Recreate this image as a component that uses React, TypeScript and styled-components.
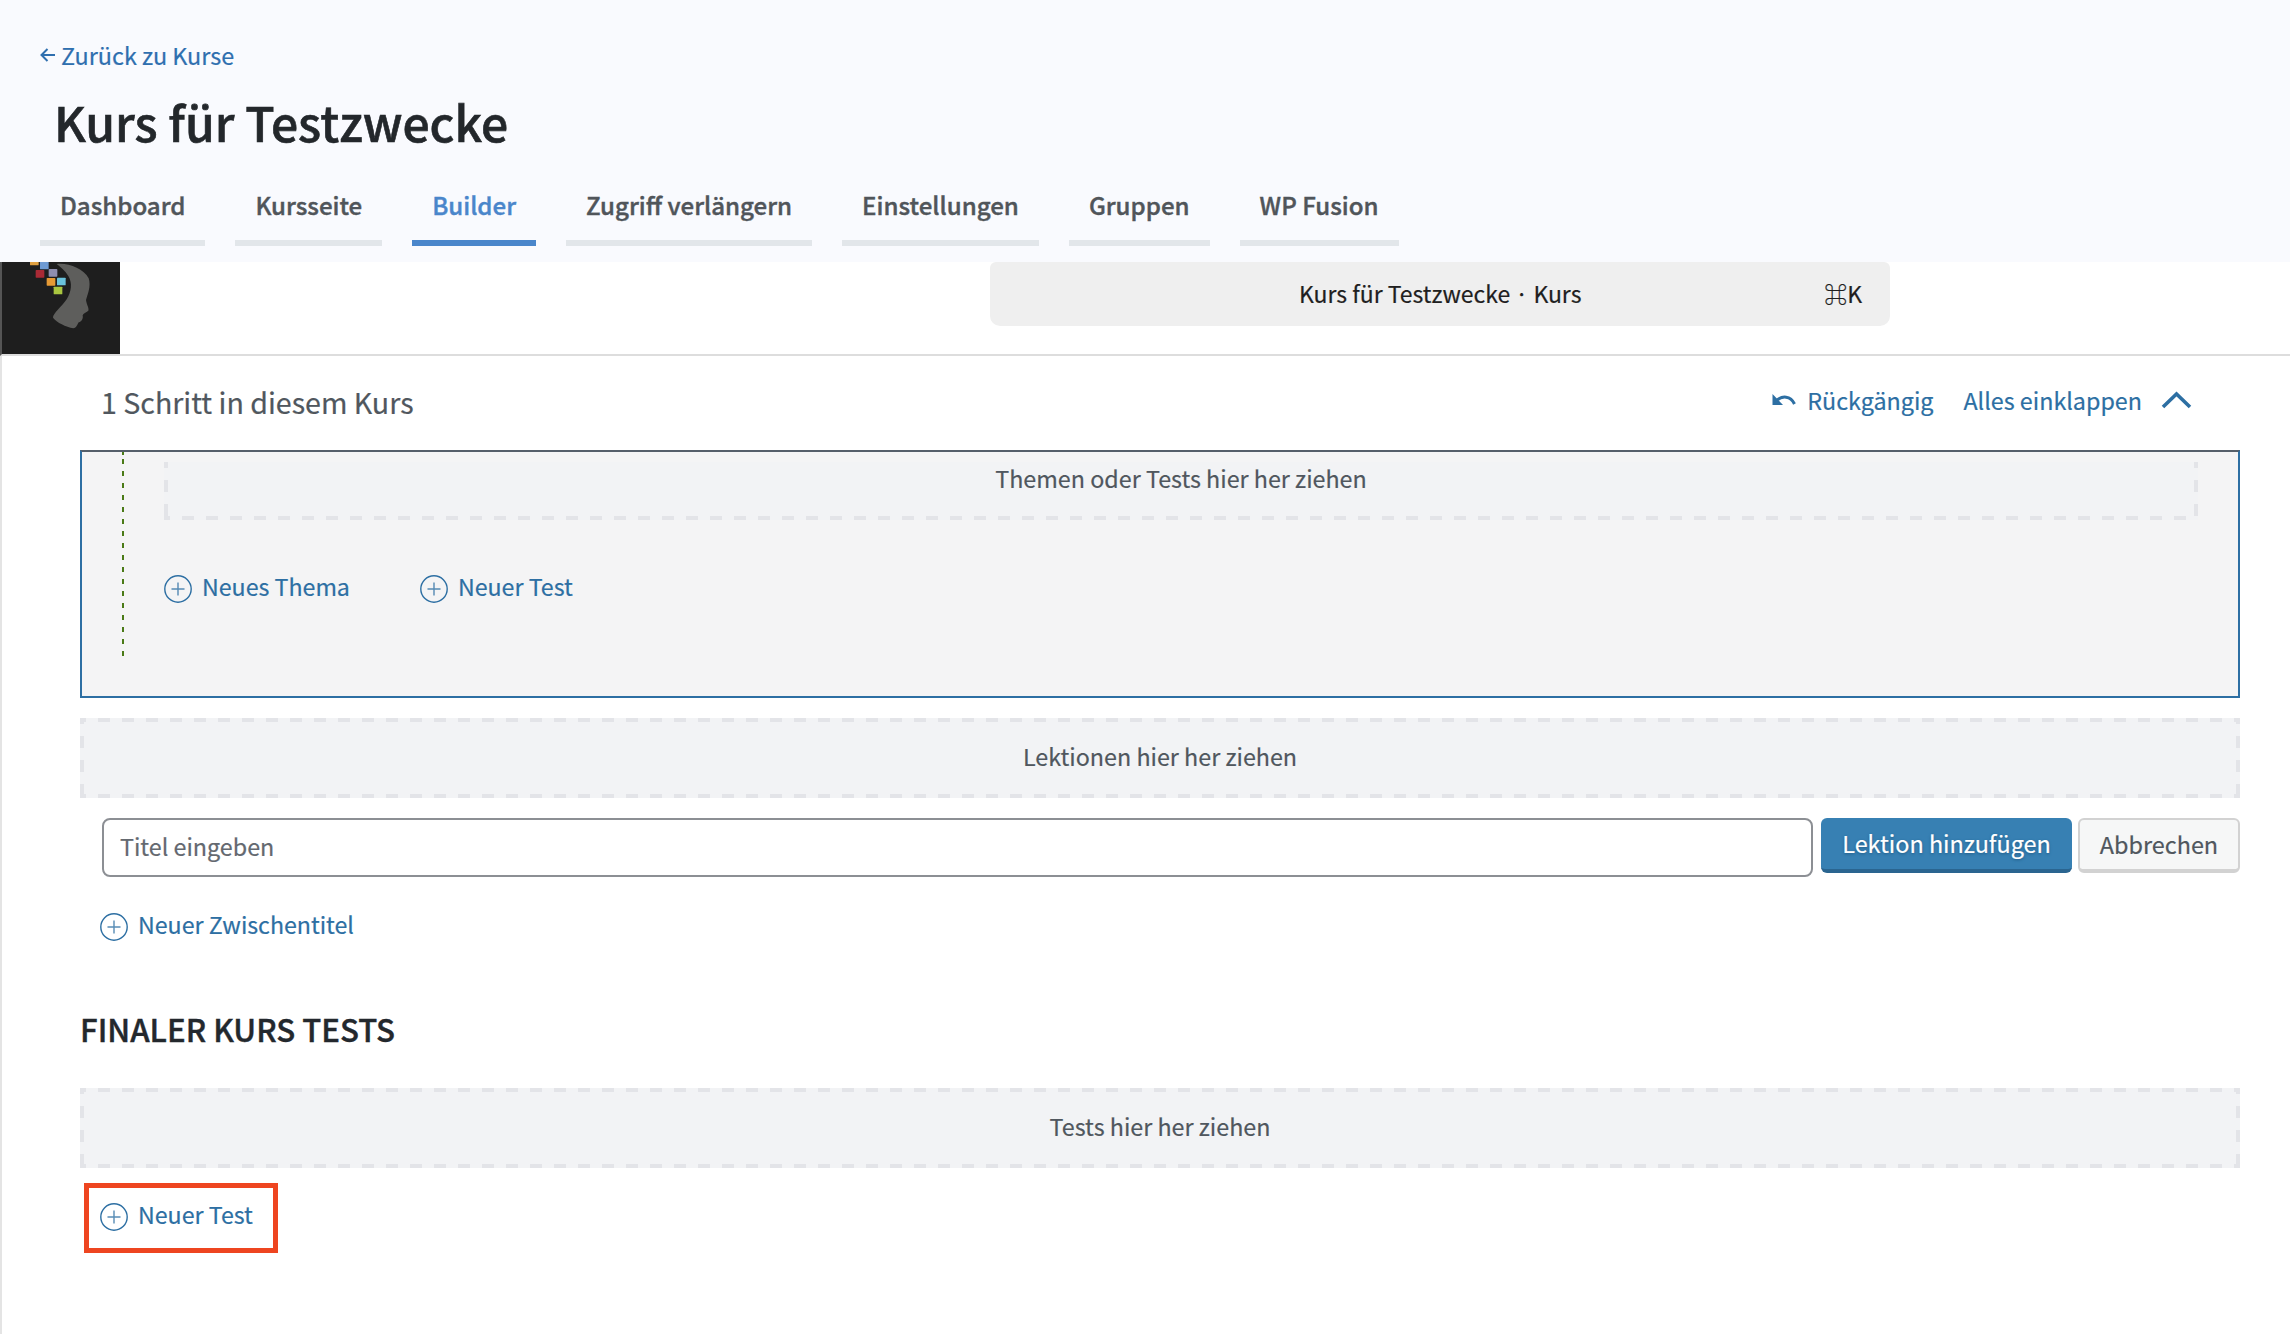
import React from "react";
import styled, { createGlobalStyle, css } from "styled-components";

const GlobalStyle = createGlobalStyle`
  html, body {
    margin: 0;
    padding: 0;
    background: #ffffff;
  }
  body {
    font-family: "Noto Sans CJK JP", "Noto Sans", sans-serif;
    -webkit-text-stroke: 0.2px;
  }
`;

const dashH = "repeating-linear-gradient(90deg, #e3e4e8 0 6px, transparent 6px 18px, #e3e4e8 18px 24px)";
const dashV = "repeating-linear-gradient(180deg, #e3e4e8 0 6px, transparent 6px 18px, #e3e4e8 18px 24px)";

const dashedFrame = css`
  background:
    ${dashH} left top / 100% 4px no-repeat,
    ${dashH} left bottom / 100% 4px no-repeat,
    ${dashV} left top / 4px 100% no-repeat,
    ${dashV} right top / 4px 100% no-repeat,
    #f2f3f5;
`;

const dashedOpenTop = css`
  background:
    ${dashH} left bottom / 100% 4px no-repeat,
    ${dashV} left top / 4px 100% no-repeat,
    ${dashV} right top / 4px 100% no-repeat,
    #f2f3f5;
`;

const Page = styled.div`
  width: 2290px;
  height: 1334px;
  overflow: hidden;
  background: #ffffff;
`;

const Header = styled.header`
  height: 262px;
  box-sizing: border-box;
  padding: 38px 0 0 40px;
  background: #f9fafe;
`;

const BackLink = styled.a`
  display: flex;
  align-items: center;
  gap: 6px;
  height: 34px;
  color: #2f6faf;
  font-size: 23.4px;
  line-height: 34px;
`;

const Title = styled.h1`
  margin: 14px 0 0 14px;
  color: #23272b;
  font-size: 48.1px;
  line-height: 70px;
  font-weight: 500;
  -webkit-text-stroke: 0.6px;
`;

const Tabs = styled.nav`
  display: flex;
  gap: 30px;
  margin-top: 32px;
`;

const Tab = styled.a<{ $active?: boolean }>`
  height: 52px;
  padding: 0 20px;
  border-bottom: 6px solid ${(p) => (p.$active ? "#4a86cb" : "#e2e6ea")};
  color: ${(p) => (p.$active ? "#4a86cb" : "#50555a")};
  font-size: 24.1px;
  line-height: 34px;
  font-weight: 500;
  -webkit-text-stroke: 0.4px;
`;

const TopBar = styled.div`
  display: flex;
  height: 94px;
  box-sizing: border-box;
  border-bottom: 2px solid #dddddd;
  border-left: 2px solid #555555;
`;

const Logo = styled.svg`
  width: 118px;
  height: 92px;
`;

const SearchBar = styled.div`
  display: flex;
  align-items: center;
  width: 900px;
  height: 64px;
  box-sizing: border-box;
  margin-left: 870px;
  padding: 0 28px 3px 309px;
  border-radius: 6px 6px 10px 10px;
  background: #efefef;
  color: #1f1f1f;
  font-size: 23px;
`;

const SearchTitle = styled.span`
  flex: 1;
`;

const Content = styled.main`
  height: 978px;
  box-sizing: border-box;
  padding: 0 50px 0 78px;
  border-left: 2px solid #e4e4e4;
`;

const StepsBar = styled.div`
  display: flex;
  align-items: center;
  justify-content: space-between;
  height: 94px;
  padding-left: 21px;
  padding-right: 48px;
`;

const StepsCount = styled.span`
  margin-bottom: 3px;
  color: #50575e;
  font-size: 28.6px;
`;

const StepsActions = styled.div`
  display: flex;
  align-items: center;
  margin-bottom: 7px;
  color: #2d6fa3;
  font-size: 23.3px;
`;

const ActionLink = styled.a`
  display: flex;
  align-items: center;
  gap: 11px;
  margin-left: 30px;
`;

const ChevronIcon = styled.svg`
  margin-left: 8px;
`;

const LessonBox = styled.section`
  position: relative;
  height: 248px;
  box-sizing: border-box;
  padding: 10px 40px 0 82px;
  border: 2px solid #2d6fa3;
  border-top-color: #555f6a;
  background: #f4f4f5;
`;

const TreeLine = styled.div`
  position: absolute;
  left: 40px;
  top: 0;
  width: 2px;
  height: 204px;
  background:
    linear-gradient(#4a7a17 0 3px, transparent 3px),
    repeating-linear-gradient(180deg, transparent 0 7px, #4a7a17 7px 12px);
`;

const DropZone = styled.div`
  display: flex;
  align-items: center;
  justify-content: center;
  box-sizing: border-box;
  height: 80px;
  padding-bottom: 4px;
  ${dashedFrame}
  color: #50575e;
  font-size: 23.3px;
`;

const NestedDropZone = styled(DropZone)`
  height: 58px;
  padding-bottom: 26px;
  ${dashedOpenTop}
`;

const LinkRow = styled.div<{ $gap?: number }>`
  display: flex;
  align-items: center;
  gap: ${(p) => p.$gap ?? 0}px;
`;

const AddLink = styled.a`
  display: flex;
  align-items: center;
  gap: 10px;
  color: #2d6fa3;
  font-size: 23.2px;
  line-height: 34px;
`;

const BoxLinks = styled(LinkRow)`
  margin-top: 49px;
`;

const LessonDrop = styled(DropZone)`
  margin-top: 20px;
`;

const AddForm = styled.form`
  display: flex;
  align-items: flex-start;
  margin: 20px 0 0 22px;
`;

const TitleInput = styled.input`
  flex: 1;
  height: 59px;
  box-sizing: border-box;
  padding: 0 16px 3px;
  border: 2px solid #8c8f94;
  border-radius: 8px;
  background: #ffffff;
  color: #50575e;
  font-family: inherit;
  font-size: 23.3px;
  &::placeholder {
    color: #646970;
    opacity: 1;
  }
`;

const PrimaryButton = styled.button`
  width: 251px;
  height: 55px;
  margin-left: 8px;
  padding: 0 0 1px;
  border: 0;
  border-bottom: 4px solid #2a6590;
  border-radius: 6px;
  background: #3780b3;
  color: #ffffff;
  font-family: inherit;
  font-size: 23.4px;
  text-shadow: 0 1px 3px #1f5a85;
`;

const SecondaryButton = styled.button`
  width: 162px;
  height: 55px;
  margin-left: 6px;
  padding: 0 0 1px;
  border: 2px solid #d2d2d2;
  border-bottom-width: 4px;
  border-radius: 6px;
  background: #f6f7f7;
  color: #50575e;
  font-family: inherit;
  font-size: 23.4px;
`;

const SubtitleRow = styled(LinkRow)`
  margin: 30px 0 0 20px;
`;

const SectionTitle = styled.h2`
  margin: 66px 0 0 0;
  color: #23282d;
  font-size: 31.2px;
  line-height: 44px;
  font-weight: 500;
  -webkit-text-stroke: 0.4px;
`;

const FinalDrop = styled(DropZone)`
  margin-top: 37px;
`;

const Highlight = styled.div`
  display: flex;
  align-items: center;
  width: 194px;
  height: 70px;
  box-sizing: border-box;
  margin: 15px 0 0 4px;
  padding: 0 0 8px 11px;
  border: 5px solid #ee4520;
`;

const PlusGlyph = styled.svg`
  margin-top: 6px;
`;

const PlusIcon = () => (
  <PlusGlyph width="28" height="28" viewBox="0 0 28 28" fill="none" stroke="#2d6fa3">
    <circle cx="14" cy="14" r="13.2" strokeWidth="1.4" />
    <path d="M14 7.5v13M7.5 14h13" strokeWidth="1.4" opacity="0.8" />
  </PlusGlyph>
);

const App: React.FC = () => {
  return (
    <Page>
      <GlobalStyle />
      <Header>
        <BackLink>
          <svg width="15" height="14" viewBox="0 0 15 14" fill="none" stroke="#2f6faf" strokeWidth="2">
            <path d="M15 7H1.500M7.500 1 1.500 7l6 6" />
          </svg>
          Zurück zu Kurse
        </BackLink>
        <Title>Kurs für Testzwecke</Title>
        <Tabs>
          <Tab>Dashboard</Tab>
          <Tab>Kursseite</Tab>
          <Tab $active>Builder</Tab>
          <Tab>Zugriff verlängern</Tab>
          <Tab>Einstellungen</Tab>
          <Tab>Gruppen</Tab>
          <Tab>WP Fusion</Tab>
        </Tabs>
      </Header>
      <TopBar>
        <Logo viewBox="6 66 354 276">
          <rect x="6" y="66" width="354" height="276" fill="#1e1e1e" />
          <path
            d="M170 72C205 68 250 85 266 115C274 140 262 165 258 180C260 195 268 205 265 212C258 217 250 220 248 226C250 235 246 245 236 247C232 255 228 265 220 265C198 260 170 248 159 233C158 222 185 200 200 178C214 155 218 130 205 108C196 92 180 80 170 72Z"
            fill="#5e5e5c"
          />
          <rect x="90" y="62" width="26" height="14" rx="2" fill="#e0a040" />
          <rect x="120" y="62" width="26" height="26" rx="2" fill="#6f9bd4" />
          <rect x="146" y="87" width="26" height="23" rx="2" fill="#8e8eb0" />
          <rect x="107" y="90" width="26" height="23" rx="2" fill="#a92a35" />
          <rect x="140" y="114" width="26" height="23" rx="2" fill="#e69a35" />
          <rect x="171" y="113" width="26" height="23" rx="2" fill="#69c2dc" />
          <rect x="161" y="140" width="26" height="23" rx="2" fill="#a9c63f" />
        </Logo>
        <SearchBar>
          <SearchTitle>Kurs für Testzwecke · Kurs</SearchTitle>
          <span>⌘K</span>
        </SearchBar>
      </TopBar>
      <Content>
        <StepsBar>
          <StepsCount>1 Schritt in diesem Kurs</StepsCount>
          <StepsActions>
            <ActionLink>
              <svg width="24" height="14" viewBox="0 0 24 14" fill="none">
                <path d="M0.500 1V12H11Z" fill="#2d6fa3" />
                <path d="M4.500 7.500C10 2.500 18.500 2.500 22.500 11" stroke="#2d6fa3" strokeWidth="3" />
              </svg>
              Rückgängig
            </ActionLink>
            <ActionLink>
              Alles einklappen
              <ChevronIcon width="31" height="18" viewBox="0 0 31 18" fill="none" stroke="#2d6fa3" strokeWidth="3.600">
                <path d="M2 16 15.500 3 29 16" />
              </ChevronIcon>
            </ActionLink>
          </StepsActions>
        </StepsBar>
        <LessonBox>
          <TreeLine />
          <NestedDropZone>Themen oder Tests hier her ziehen</NestedDropZone>
          <BoxLinks $gap={70}>
            <AddLink>
              <PlusIcon />
              Neues Thema
            </AddLink>
            <AddLink>
              <PlusIcon />
              Neuer Test
            </AddLink>
          </BoxLinks>
        </LessonBox>
        <LessonDrop>Lektionen hier her ziehen</LessonDrop>
        <AddForm>
          <TitleInput placeholder="Titel eingeben" />
          <PrimaryButton type="button">Lektion hinzufügen</PrimaryButton>
          <SecondaryButton type="button">Abbrechen</SecondaryButton>
        </AddForm>
        <SubtitleRow>
          <AddLink>
            <PlusIcon />
            Neuer Zwischentitel
          </AddLink>
        </SubtitleRow>
        <SectionTitle>FINALER KURS TESTS</SectionTitle>
        <FinalDrop>Tests hier her ziehen</FinalDrop>
        <Highlight>
          <AddLink>
            <PlusIcon />
            Neuer Test
          </AddLink>
        </Highlight>
      </Content>
    </Page>
  );
};

export default App;
